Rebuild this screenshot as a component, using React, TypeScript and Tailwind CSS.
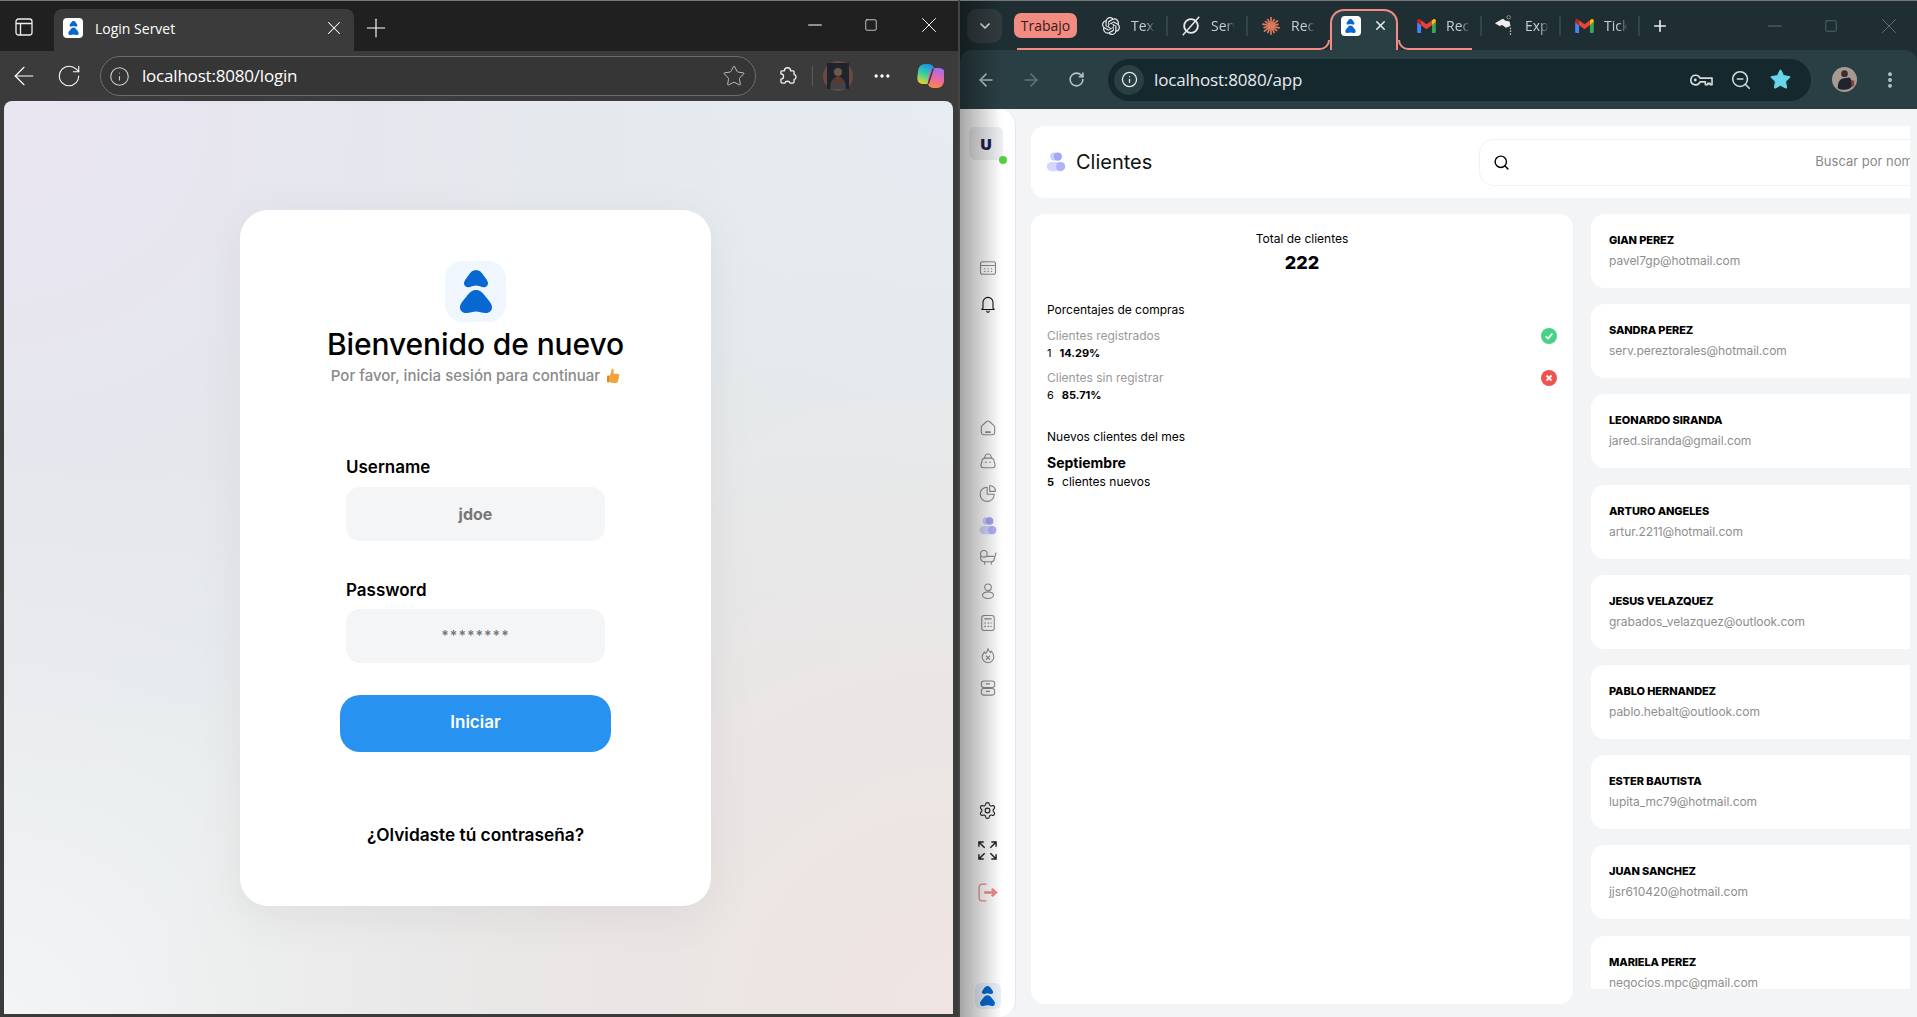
import React from "react";
import { ArrowLeft, ArrowRight, ChevronDown, Info, Minus, MoreHorizontal, MoreVertical, Plus, RotateCw, Search, Settings, Square, Star, X, ZoomOut } from "lucide-react";
import { SiOpenai } from "react-icons/si";

function Logo({ className }: { className?: string }) {
  return (
    <svg viewBox="0 0 32 43" className={className} fill="#0668d0">
      <path d="M16 0C19.5 0 21.5 2 24 6C26.5 9.5 28 11 28 13.5C28 16.5 25 17.8 22 17C20 16.4 18 15.6 16 15.6C14 15.6 12 16.4 10 17C7 17.8 4 16.5 4 13.5C4 11 5.5 9.5 8 6C10.5 2 12.5 0 16 0Z" />
      <path d="M16 20C20 20 22.5 22.5 25.5 26.5C29 31 32 33.5 32 37.5C32 41 29 43 25.5 43C22 43 19 41.5 16 41.5C13 41.5 10 43 6.5 43C3 43 0 41 0 37.5C0 33.5 3 31 6.5 26.5C9.5 22.5 12 20 16 20Z" />
    </svg>
  );
}

function Gmail({ className }: { className?: string }) {
  return (
    <svg viewBox="0 0 24 18" className={className}>
      <path d="M0 4v12.5A1.5 1.5 0 0 0 1.5 18H5V8z" fill="#4285f4" />
      <path d="M19 8v10h3.5a1.5 1.5 0 0 0 1.5-1.5V4z" fill="#34a853" />
      <path d="M19 1.5V8l5-4V2.2C24 .4 21.9-.6 20.5.5z" fill="#fbbc04" />
      <path d="M5 8V1.5l7 5.3 7-5.3V8l-7 5.3z" fill="#ea4335" />
      <path d="M0 2.2V4l5 4V1.5L3.5.5C2.1-.6 0 .4 0 2.2z" fill="#c5221f" />
    </svg>
  );
}

function ClaudeStar() {
  const rays = Array.from({ length: 14 }, (_, i) => (i * 360) / 14);
  return (
    <svg viewBox="0 0 24 24" className="h-5 w-5" stroke="#e0795c" strokeWidth="2" strokeLinecap="round">
      {rays.map((r) => (
        <line key={r} x1="12" y1="12" x2="12" y2={r % 3 < 1 ? 2 : 3.5} transform={`rotate(${r} 12 12)`} />
      ))}
    </svg>
  );
}

function SerIcon() {
  return (
    <svg viewBox="0 0 24 24" className="h-[22px] w-[22px]" fill="none" stroke="#e8eaed" strokeWidth="2">
      <circle cx="12" cy="12" r="7.5" />
      <path d="M21 2 3 22" strokeWidth="1.6" />
    </svg>
  );
}

function ExpIcon() {
  return (
    <svg viewBox="0 0 24 24" className="h-[22px] w-[22px]">
      <path d="M1 9l7-4 2-1 2 2 5 1 1 5-5 2-4-3-3 1z" fill="#eeeeee" />
      <circle cx="16" cy="2.5" r="1.8" fill="#111" stroke="#ddd" strokeWidth=".7" />
      <path d="M18 14v8" stroke="#ccc" strokeWidth="1.4" strokeDasharray="1.5 1.5" />
    </svg>
  );
}

function Tab({ icon, label, sep = true, width = "w-[79px]", trail = "mr-[10px]" }: { icon: React.ReactNode; label: string; sep?: boolean; width?: string; trail?: string }) {
  return (
    <div className={`flex h-[34px] ${width} shrink-0 items-center`}>
      <div className="flex w-[58px] items-center gap-[9px] pl-[2px]">
        <div className="flex w-[22px] shrink-0 items-center justify-center">{icon}</div>
        <span className="w-[24px] overflow-hidden whitespace-nowrap text-[14px] text-[#c6d0d2] [mask-image:linear-gradient(to_right,black_60%,transparent)]">{label}</span>
      </div>
      <div className={`ml-auto ${trail} h-[20px] w-[2px] rounded bg-[#33454a]`} style={{ opacity: sep ? 1 : 0 }} />
    </div>
  );
}

function LeftWindow() {
  return (
    <div className="flex h-full w-[958px] shrink-0 flex-col border-t border-[#777] bg-[#3b3b3b] font-['Open_Sans',sans-serif] text-white">
      <div className="flex h-[50px] shrink-0 items-end bg-[#202020]">
        <div className="mr-[6px] flex h-[42px] w-[48px] items-center justify-center pb-[6px]">
          <svg viewBox="0 0 18 18" className="h-[18px] w-[18px]" fill="none" stroke="#eee" strokeWidth="1.3">
            <rect x="1" y="1" width="16" height="16" rx="2.5" />
            <path d="M1 5.5h16M5.5 5.5V17" />
          </svg>
        </div>
        <div className="flex h-[42px] w-[300px] items-center rounded-t-lg bg-[#3b3b3b] pb-[4px] pl-[9px] pr-[9px]">
          <div className="flex h-5 w-5 items-center justify-center rounded bg-white">
            <Logo className="h-[14px] w-[11px]" />
          </div>
          <span className="ml-[12px] flex-1 text-[14px]">Login Servet</span>
          <X className="h-[22px] w-[22px]" strokeWidth={1.1} />
        </div>
        <div className="flex h-[42px] w-[44px] items-center justify-center pb-[4px]">
          <Plus className="h-[30px] w-[30px]" strokeWidth={0.9} />
        </div>
        <div className="ml-auto flex h-[50px] items-center gap-[38px] pb-[2px] pr-[16px]">
          <Minus className="h-[22px] w-[22px]" strokeWidth={1.1} />
          <Square className="h-[14px] w-[14px]" strokeWidth={1.2} />
          <X className="h-[26px] w-[26px]" strokeWidth={0.9} />
        </div>
      </div>
      <div className="flex h-[50px] shrink-0 items-center">
        <div className="flex w-[100px] items-center gap-[17px] pl-[9px]">
          <ArrowLeft className="h-[30px] w-[30px]" strokeWidth={0.9} />
          <RotateCw className="h-[26px] w-[26px]" strokeWidth={1} />
        </div>
        <div className="flex h-[40px] w-[656px] items-center rounded-full border border-[#6f6f6f] bg-[#363636] pl-[8px] pr-[9px]">
          <Info className="h-[21px] w-[21px] text-[#d0d0d0]" strokeWidth={1.2} />
          <span className="ml-[12px] flex-1 text-[17px] tracking-[-0.2px]">localhost:8080/login</span>
          <Star className="h-[24px] w-[24px] text-[#bbb]" strokeWidth={1} />
        </div>
        <svg viewBox="0 0 24 24" className="ml-[21px] h-[21px] w-[21px]" fill="none" stroke="#f0f0f0" strokeWidth="1.5" strokeLinejoin="round">
          <path d="M8.500 5.500a3.500 3.500 0 0 1 7 0h3a1 1 0 0 1 1 1v3.200a3 3 0 0 1 0 5.800V18a1.500 1.500 0 0 1-1.500 1.500h-3a3.200 3.200 0 0 0-6 0H6A1.500 1.500 0 0 1 4.500 18v-3a3 3 0 0 0 0-6V6.500a1 1 0 0 1 1-1z" />
        </svg>
        <div className="ml-[14px] h-[20px] w-px bg-[#5a5a5a]" />
        <svg viewBox="0 0 30 30" className="ml-[10px] h-[30px] w-[30px]">
          <circle cx="15" cy="15" r="15" fill="#6b4a44" />
          <rect x="4" y="2" width="22" height="26" fill="#20242a" />
          <circle cx="15" cy="11" r="4" fill="#6d5850" />
          <path d="M7 28c0-9 4-12 8-12s8 3 8 12z" fill="#3d4348" />
          <path d="M9 20l6-6 6 6-3 3h-6z" fill="#5a3a30" />
        </svg>
        <MoreHorizontal className="ml-[19px] h-5 w-5" strokeWidth={2} />
        <svg viewBox="0 0 28 28" className="ml-[24px] h-[28px] w-[28px]">
          <defs>
            <linearGradient id="cp1" x1="0.6" y1="0" x2="0.3" y2="1">
              <stop offset="0" stopColor="#1f8fe8" />
              <stop offset=".5" stopColor="#35d0a0" />
              <stop offset="1" stopColor="#f5d327" />
            </linearGradient>
            <linearGradient id="cp2" x1="0.6" y1="0" x2="0.4" y2="1">
              <stop offset="0" stopColor="#a06cf0" />
              <stop offset=".6" stopColor="#ef6a9a" />
              <stop offset="1" stopColor="#f78d3f" />
            </linearGradient>
          </defs>
          <rect x="1" y="2" width="16" height="20" rx="6" fill="url(#cp1)" transform="skewX(-6) translate(2 0)" />
          <rect x="12" y="6" width="16" height="20" rx="6" fill="url(#cp2)" transform="skewX(-6) translate(2 0)" />
          <path d="M17 7 12.500 21" stroke="#3b3b3b" strokeWidth="1.600" strokeLinecap="round" />
        </svg>
      </div>
      <div className="mb-[3px] ml-[4px] mr-[5px] flex min-h-0 flex-1 items-center justify-center rounded-t-lg bg-[radial-gradient(ellipse_at_0%_0%,#e9e5f2_0%,transparent_55%),radial-gradient(ellipse_at_100%_100%,#efe4e2_0%,transparent_60%),radial-gradient(ellipse_at_0%_100%,#f3f4f5_0%,transparent_45%),radial-gradient(ellipse_at_100%_0%,#e6ecf1_0%,transparent_55%),linear-gradient(#e2e8e8,#e2e8e8)] pr-[6px] font-['Inter',sans-serif]">
        <div className="flex h-[696px] w-[471px] flex-col items-center rounded-[28px] bg-white pt-[51px] shadow-[0_10px_40px_rgba(120,110,110,0.10)]">
          <div className="flex h-[61px] w-[61px] items-center justify-center rounded-[18px] bg-[#eff6fe]">
            <Logo className="h-[43px] w-[32px]" />
          </div>
          <h1 className="mt-[2px] text-[30px] leading-[40px] font-medium tracking-[-0.1px] text-black">Bienvenido de nuevo</h1>
          <p className="mt-[2px] flex items-center gap-[7px] text-[15px] leading-[20px] font-medium text-[#8a8a8a]">
            Por favor, inicia sesión para continuar
            <svg viewBox="0 0 14 16" className="h-[15px] w-[13px]">
              <path d="M5 1c1-1 2.500 0 2.200 2L7 6h4.500c1.500 0 2 1.500 1.500 3l-1 5c-.3 1-1 2-2.500 2H6c-1.500 0-3-.5-3-2V8c1-2 2-5 2-7z" fill="#f2a33a" />
              <rect x="0" y="8" width="3" height="7.500" rx="1" fill="#e58a1f" />
            </svg>
          </p>
          <div className="mt-[71px] w-[259px]">
            <label className="block text-[17px] leading-[20px] font-semibold text-black">Username</label>
            <div className="mt-[10px] flex h-[54px] items-center justify-center rounded-[14px] bg-[#f4f5f7] text-[16px] font-bold text-[#777]">jdoe</div>
            <label className="mt-[39px] block text-[17px] leading-[20px] font-semibold text-black">Password</label>
            <div className="mt-[9px] flex h-[54px] items-center justify-center rounded-[14px] bg-[#f4f5f7] text-[14px] font-semibold tracking-[1px] text-[#777]">********</div>
          </div>
          <button className="mt-[32px] flex h-[57px] w-[271px] items-center justify-center rounded-[20px] bg-[#2892f0] text-[17px] font-semibold text-white">Iniciar</button>
          <p className="mt-[73px] text-[17.3px] leading-[20px] font-semibold text-black">¿Olvidaste tú contraseña?</p>
        </div>
      </div>
    </div>
  );
}

const Ic = ({ children, color = "#8c8c8c" }: { children: React.ReactNode; color?: string }) => (
  <svg viewBox="0 0 24 24" className="h-[20px] w-[20px]" fill="none" stroke={color} strokeWidth="1.3" strokeLinecap="round" strokeLinejoin="round">
    {children}
  </svg>
);

const UsersDuo = ({ className }: { className: string }) => (
  <svg viewBox="0 0 24 24" className={className}>
    <circle cx="10" cy="6" r="4.500" fill="#cfd0fb" />
    <circle cx="14" cy="6" r="4.500" fill="#a3a5f7" />
    <rect x="2" y="12" width="20" height="10" rx="5" fill="#d5d6fb" />
    <circle cx="17" cy="17" r="5" fill="#b1b3f8" />
  </svg>
);

function Sidebar() {
  const nav = [
    <Ic key="home"><path d="M4 10l6-5.500c1.200-1 2.800-1 4 0L20 10v7a3 3 0 0 1-3 3H7a3 3 0 0 1-3-3z" /><path d="M9.500 17h5" strokeWidth="2" /></Ic>,
    <Ic key="bag"><path d="M5 11l-1.500 6a3 3 0 0 0 3 3h11a3 3 0 0 0 3-3L19 11c-.5-1.500-1.500-2.500-3-2.500H8c-1.500 0-2.500 1-3 2.500z" /><path d="M8 8.500a4 5 0 0 1 8 0" /><path d="M9.500 13.500h.01M14.500 13.500h.01" strokeWidth="2" /></Ic>,
    <Ic key="pie"><path d="M11 5a8.500 8.500 0 1 0 8.500 8.500H11z" /><path d="M14 3a7 7 0 0 1 7 7h-7z" /></Ic>,
    <UsersDuo key="users" className="h-[20px] w-[20px]" />,
    <Ic key="cart"><circle cx="7" cy="7" r="4" /><path d="M3 10c0 4 1 6.500 4 6.500h9c2 0 3-1 3.500-3L21.500 6M8 16.500v3M16 16.500v3" /><path d="M11 10h8" /></Ic>,
    <Ic key="person"><circle cx="12" cy="7.500" r="4" /><ellipse cx="12" cy="17" rx="6.500" ry="4" /></Ic>,
    <Ic key="calc"><rect x="4.500" y="3" width="15" height="18" rx="3" /><path d="M8 7h8M8 12h1M12 12h1M15.500 12h.5M8 16h1M12 16h1M15.500 16h.5" /></Ic>,
    <Ic key="flame"><path d="M12 3c.5 3 2 3.500 3 5 .5-.5 1-1 1-2 2 2.500 3 4.500 3 7a7 7 0 0 1-14 0c0-2.500 2-4 2.500-6 .5.500 1 1 1.500 2 1.500-1.500 3-3.500 3-6z" /><path d="M10 12l4 4M14 12l-4 4" /></Ic>,
    <Ic key="archive"><rect x="4" y="3.500" width="16" height="8" rx="3" /><rect x="4" y="12.500" width="16" height="8" rx="3" /><path d="M10 7h4M10 16h4" /></Ic>,
  ];
  return (
    <aside className="relative flex w-[56px] shrink-0 flex-col items-center rounded-r-[16px] border-r border-[#e4e5e7] bg-white pt-[18px]">
      <div className="relative mr-[3px] flex h-[33px] w-[34px] items-center justify-center rounded-[6px] bg-[#eceef0] text-[16px] font-extrabold text-[#211b4e]">
        U
        <span className="absolute -right-[4px] -bottom-[4px] h-[8px] w-[8px] rounded-full bg-[#55cc44]" />
      </div>
      <div className="mt-[98px]">
        <Ic><rect x="3" y="4.500" width="18" height="15" rx="2.500" /><path d="M3 9h18" /><path d="M8 13h.5M12 13h.5M16 13h.5M8 16h.5M12 16h.5M16 16h.5" /></Ic>
      </div>
      <div className="mt-[16px]">
        <Ic color="#111"><path d="M6 17V10a6 6 0 0 1 12 0v7l1.500 1.500h-15z" /><path d="M10.500 20.500a1.500 1.500 0 0 0 3 0" /></Ic>
      </div>
      <div className="mt-[104px] flex flex-col items-center gap-[12.500px]">{nav}</div>
      <div className="mt-[103px]">
        <Settings className="h-[19px] w-[19px] text-[#222]" strokeWidth={1.4} />
      </div>
      <svg viewBox="0 0 20 20" className="mt-[21px] h-[19px] w-[19px]" fill="none" stroke="#222" strokeWidth="1.500">
        <path d="M1 6V1h5M14 1h5v5M19 14v5h-5M6 19H1v-5M1.500 1.500 7 7M18.500 1.500 13 7M18.500 18.500 13 13M1.500 18.500 7 13" />
      </svg>
      <svg viewBox="0 0 20 20" className="mt-[22px] h-[21px] w-[21px]" fill="none" stroke="#f08a8a">
        <path d="M9 2H5a3 3 0 0 0-3 3v10a3 3 0 0 0 3 3h4" strokeWidth="1.200" />
        <path d="M7 10h10M14 6.500 18 10l-4 3.500" strokeWidth="2.400" />
      </svg>
      <div className="mt-[80px] flex h-[26px] w-[26px] items-center justify-center rounded-[6px] bg-[#e9f1fb]">
        <Logo className="h-[20px] w-[15px]" />
      </div>
    </aside>
  );
}

const clients = [
  ["GIAN PEREZ", "pavel7gp@hotmail.com"],
  ["SANDRA PEREZ", "serv.pereztorales@hotmail.com"],
  ["LEONARDO SIRANDA", "jared.siranda@gmail.com"],
  ["ARTURO ANGELES", "artur.2211@hotmail.com"],
  ["JESUS VELAZQUEZ", "grabados_velazquez@outlook.com"],
  ["PABLO HERNANDEZ", "pablo.hebalt@outlook.com"],
  ["ESTER BAUTISTA", "lupita_mc79@hotmail.com"],
  ["JUAN SANCHEZ", "jjsr610420@hotmail.com"],
  ["MARIELA PEREZ", "negocios.mpc@gmail.com"],
];

function Main() {
  return (
    <div className="flex min-w-0 flex-1 flex-col pl-[15px] pr-[7px] pt-[17px] font-['Inter',sans-serif]">
      <div className="min-h-0 flex-1 overflow-hidden">
        <div className="flex h-[72px] w-[960px] items-center rounded-[14px] bg-white pl-[14px]">
          <UsersDuo className="h-[22px] w-[22px]" />
          <span className="ml-[9px] text-[20px] text-[#111]">Clientes</span>
          <div className="ml-[327px] flex h-[47px] flex-1 items-center rounded-[14px] border border-[#f1f2f4] pl-[13px]">
            <Search className="h-[17px] w-[17px] text-black" strokeWidth={2} />
            <span className="ml-[305px] whitespace-nowrap text-[13px] text-[#888]">Buscar por nombre</span>
          </div>
        </div>
        <div className="mt-[16px] flex w-[960px] gap-[18px]">
          <div className="h-[790px] w-[542px] shrink-0 rounded-[14px] bg-white px-[16px] pt-[17px] text-black">
            <p className="text-center text-[12px] leading-[16px]">Total de clientes</p>
            <p className="mt-[3px] text-center text-[18px] leading-[26px] font-extrabold">222</p>
            <p className="mt-[26px] text-[12px] leading-[16px]">Porcentajes de compras</p>
            <div className="mt-[10px] flex justify-between">
              <div>
                <p className="text-[12px] leading-[16px] text-[#999]">Clientes registrados</p>
                <p className="mt-[1px] text-[11px] leading-[16px]">1<b className="ml-[8px] font-bold">14.29%</b></p>
              </div>
              <span className="flex h-4 w-4 items-center justify-center rounded-full bg-[#48d285]">
                <svg viewBox="0 0 12 12" className="h-[10px] w-[10px]" fill="none" stroke="#fff" strokeWidth="2"><path d="M2 6.500 5 9l5-6" /></svg>
              </span>
            </div>
            <div className="mt-[9px] flex justify-between">
              <div>
                <p className="text-[12px] leading-[16px] text-[#999]">Clientes sin registrar</p>
                <p className="mt-[1px] text-[11px] leading-[16px]">6<b className="ml-[8px] font-bold">85.71%</b></p>
              </div>
              <span className="flex h-4 w-4 items-center justify-center rounded-full bg-[#ef5350]">
                <svg viewBox="0 0 12 12" className="h-[10px] w-[10px]" fill="none" stroke="#fff" strokeWidth="2.200"><path d="M3 3l6 6M9 3l-6 6" /></svg>
              </span>
            </div>
            <p className="mt-[26px] text-[12px] leading-[16px]">Nuevos clientes del mes</p>
            <p className="mt-[8px] text-[14px] leading-[20px] font-bold">Septiembre</p>
            <p className="mt-[1px] text-[12px] leading-[16px]"><b className="mr-[8px] text-[11px] font-bold">5</b>clientes nuevos</p>
          </div>
          <div className="flex h-[775px] flex-1 flex-col gap-[16.200px] overflow-hidden">
            {clients.map(([name, email]) => (
              <div key={name} className="h-[74px] shrink-0 rounded-[14px] bg-white pl-[18px] pt-[18px]">
                <p className="text-[11px] leading-[16px] font-extrabold tracking-[-0.1px] text-black">{name}</p>
                <p className="mt-[5px] text-[12px] leading-[16px] tracking-[-0.05px] text-[#8e8e8e]">{email}</p>
              </div>
            ))}
          </div>
        </div>
      </div>
    </div>
  );
}

function RightWindow() {
  return (
    <div className="relative flex h-full min-w-0 flex-1 flex-col overflow-hidden border-t border-[#777] bg-[#1e2e32] font-['Open_Sans',sans-serif] text-[#e8eaed]">
      <div className="relative flex h-[49px] shrink-0 items-center pl-[7px]">
        <div className="flex h-[34px] w-[35px] items-center justify-center rounded-[10px] bg-[#323c3f]">
          <ChevronDown className="h-4 w-4" strokeWidth={2.5} />
        </div>
        <div className="ml-[12px] flex h-[34px] w-[316px] items-center">
          <div className="flex h-[25px] w-[63px] items-center justify-center rounded-[7px] bg-[#f28b82] text-[14px] text-[#3a1a18]">Trabajo</div>
          <div className="ml-[21px] flex">
            <Tab icon={<SiOpenai className="h-[18px] w-[18px]" />} label="Text" width="w-[80px]" />
            <Tab icon={<SerIcon />} label="Serv" width="w-[80px]" />
            <Tab icon={<ClaudeStar />} label="Recl" sep={false} width="w-[70px]" />
          </div>
        </div>
        <div className="relative flex h-[41px] w-[68px] shrink-0 items-start justify-center gap-[12px] self-end rounded-t-[14px] border-2 border-b-0 border-[#f28b82] bg-[#2a3f44] pt-[5px]">
          <span className="absolute -left-[12px] bottom-0 h-[10px] w-[10px] rounded-br-[10px] border-b-2 border-r-2 border-[#f28b82]" />
          <span className="absolute -right-[12px] bottom-0 h-[10px] w-[10px] rounded-bl-[10px] border-b-2 border-l-2 border-[#f28b82]" />
          <div className="flex h-5 w-5 items-center justify-center rounded bg-white">
            <Logo className="h-[14px] w-[11px]" />
          </div>
          <X className="mt-[2px] h-[15px] w-[15px]" strokeWidth={2.4} />
        </div>
        <div className="ml-[15px] flex">
          <Tab icon={<Gmail className="h-[14px] w-[19px]" />} label="Recl" />
          <Tab icon={<ExpIcon />} label="Expl" />
          <Tab icon={<Gmail className="h-[14px] w-[19px]" />} label="Tick" />
        </div>
        <Plus className="ml-[1px] h-[18px] w-[18px]" strokeWidth={2.2} />
        <div className="ml-auto flex items-center gap-[38px] pr-[15px] text-[#5e7075]">
          <Minus className="h-[22px] w-[22px]" strokeWidth={1.1} />
          <Square className="h-[14px] w-[14px]" strokeWidth={1.4} />
          <X className="h-[26px] w-[26px]" strokeWidth={0.9} />
        </div>
        <div className="absolute bottom-0 left-[57px] h-[2px] w-[303px] bg-[#f28b82]" />
        <div className="absolute bottom-0 left-[448px] h-[2px] w-[64px] bg-[#f28b82]" />
      </div>
      <div className="flex h-[59px] shrink-0 items-center rounded-t-[12px] bg-[#2a3f44] pl-[16px]">
        <ArrowLeft className="h-5 w-5 text-[#b5c4c7]" strokeWidth={2} />
        <ArrowRight className="ml-[25px] h-5 w-5 text-[#5e7378]" strokeWidth={2} />
        <RotateCw className="ml-[27px] h-[17px] w-[17px] text-[#b5c4c7]" strokeWidth={2.2} />
        <div className="ml-[23px] flex h-[42px] w-[703px] items-center rounded-full bg-[#14282d] pl-[6px] pr-[19px]">
          <div className="flex h-[30px] w-[30px] items-center justify-center rounded-full bg-[#2a3f44]">
            <Info className="h-[17px] w-[17px]" strokeWidth={1.8} />
          </div>
          <span className="ml-[10px] flex-1 text-[17px] tracking-[-0.15px]">localhost:8080/app</span>
          <svg viewBox="0 0 24 12" className="h-[12px] w-[23px]" fill="none" stroke="#d5dcdd" strokeWidth="1.700" strokeLinejoin="round">
            <path d="M6 1a5 5 0 1 0 4.500 7H16v3h2.500V9.500H21V11h2V4H10.500A5 5 0 0 0 6 1z" />
            <circle cx="5.500" cy="6" r="1.500" fill="#d5dcdd" stroke="none" />
          </svg>
          <ZoomOut className="ml-[17px] h-[22px] w-[22px] text-[#d5dcdd]" strokeWidth={1.7} />
          <Star className="ml-[17px] h-[23px] w-[23px] text-[#68d5ea]" fill="#68d5ea" strokeWidth={1} />
        </div>
        <svg viewBox="0 0 26 26" className="ml-[21px] h-[25px] w-[25px]">
          <circle cx="13" cy="13" r="13" fill="#a89a90" />
          <path d="M6 22c0-6 2-9 5-10l7-1c2 1 3 5 3 9-3 4-10 5-15 2z" fill="#1d2430" />
          <circle cx="13" cy="7" r="3.500" fill="#3a2f2b" />
          <rect x="20" y="14" width="3" height="6" fill="#8a3b3f" />
        </svg>
        <MoreVertical className="ml-[23px] h-5 w-5 text-[#b5c9ce]" strokeWidth={2.6} />
      </div>
      <div className="flex min-h-0 flex-1 bg-[#f3f4f6]">
        <Sidebar />
        <Main />
      </div>
      <div className="pointer-events-none absolute inset-y-0 left-0 w-[42px] bg-gradient-to-r from-black/35 to-transparent" />
    </div>
  );
}

export default function App() {
  return (
    <div className="flex h-screen w-screen overflow-hidden bg-[#3b3b3b]">
      <LeftWindow />
      <div className="w-[2px] shrink-0 bg-[#444]" />
      <RightWindow />
    </div>
  );
}
